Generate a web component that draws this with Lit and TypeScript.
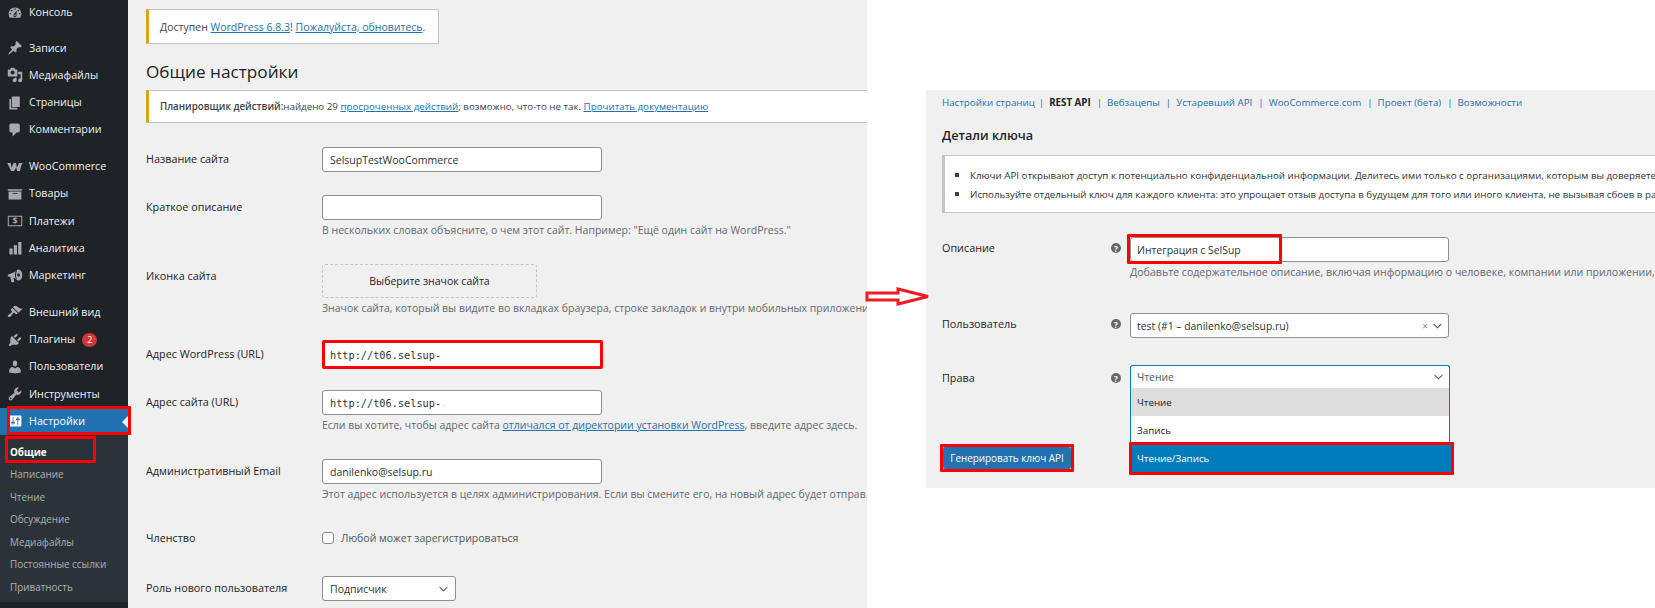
import { LitElement, html, css, svg } from "lit";
import { customElement } from "lit/decorators.js";

const I: Record<string, any> = {
  dash: svg`<path fill-rule="evenodd" d="M3.76 16h12.48c1.1-1.37 1.76-3.11 1.76-5 0-4.42-3.58-8-8-8s-8 3.58-8 8c0 1.89.66 3.63 1.76 5zM10 4c.55 0 1 .45 1 1s-.45 1-1 1-1-.45-1-1 .45-1 1-1zM6 6c.55 0 1 .45 1 1s-.45 1-1 1-1-.45-1-1 .45-1 1-1zm8 0c.55 0 1 .45 1 1s-.45 1-1 1-1-.45-1-1 .45-1 1-1zm-5.37 5.55L12 7v6c0 1.1-.9 2-2 2s-2-.9-2-2c0-.57.24-1.08.63-1.45zM4 10c.55 0 1 .45 1 1s-.45 1-1 1-1-.45-1-1 .45-1 1-1zm12 0c.55 0 1 .45 1 1s-.45 1-1 1-1-.45-1-1 .45-1 1-1zm-5 3c0-.55-.45-1-1-1s-1 .45-1 1 .45 1 1 1 1-.45 1-1z"/>`,
  pin: svg`<path d="M10.44 3.02l1.82-1.82 6.36 6.35-1.83 1.82c-1.05-.68-2.48-.57-3.41.36l-.75.75c-.92.93-1.04 2.35-.35 3.41l-1.83 1.82-2.41-2.41-2.8 2.79c-.42.42-3.38 2.71-3.8 2.29s1.86-3.39 2.28-3.81l2.79-2.79L4.1 9.36l1.83-1.82c1.05.69 2.48.57 3.4-.36l.75-.75c.93-.92 1.05-2.35.36-3.41z"/>`,
  media: svg`<path fill-rule="evenodd" d="M13 11V4c0-.55-.45-1-1-1h-1.67L9 1H5L3.67 3H2c-.55 0-1 .45-1 1v7c0 .55.45 1 1 1h10c.55 0 1-.45 1-1zM7 4.5c1.38 0 2.5 1.12 2.5 2.5S8.38 9.5 7 9.5 4.5 8.38 4.5 7 5.62 4.5 7 4.5zM14 6h5v10.5c0 1.38-1.12 2.5-2.5 2.5S14 17.88 14 16.5s1.12-2.5 2.5-2.5c.17 0 .34.02.5.05V9h-3V6zm-4 8.05V13h2v3.5c0 1.38-1.12 2.5-2.5 2.5S7 17.88 7 16.5 8.12 14 9.5 14c.17 0 .34.02.5.05z"/>`,
  page: svg`<path d="M6 15V2h10v13H6zm-1 1h8v2H3V5h2v11z"/>`,
  comment: svg`<path d="M5 2h9c1.1 0 2 .9 2 2v7c0 1.1-.9 2-2 2h-2l-5 5v-5H5c-1.1 0-2-.9-2-2V4c0-1.1.9-2 2-2z"/>`,
  woo: svg`<path d="M.3 5h4.4l1 6L8.3 5h3l.9 6L15 5h4.7c-1.4 1.7-2.7 5-3.4 10h-3.6l-1.3-4.4L9 15H5.2z"/>`,
  box: svg`<path fill-rule="evenodd" d="M19 4v2H1V4h18zM2 7h16v10H2V7zm11 3V9H7v1h6z"/>`,
  pay: svg`<path fill-rule="evenodd" d="M1 3.5h18v13H1zM2.2 4.7v10.6h15.6V4.7z"/><text x="10" y="14.3" font-size="11" font-weight="700" text-anchor="middle" font-family="Open Sans, sans-serif">$</text>`,
  chart: svg`<path d="M3 10.5h4V18H3zM8.5 6.5h4V18h-4zM14 2.5h4V18h-4z"/>`,
  mega: svg`<path fill-rule="evenodd" d="M1 8.5 12.5 3.6c-.9 1.5-1.3 3.4-1.3 5.2s.4 3.6 1.3 5.1L8 12.1l1 4.5c.1.6-.3 1.2-1 1.2H6.2c-.5 0-.9-.3-1-.8l-1-5.8-3.2-1zM14.5 2a4.6 6.8 0 1 1 0 13.6 4.6 6.8 0 0 1 0-13.6zm0 4.6a1.8 2.2 0 1 0 0 4.4 1.8 2.2 0 0 0 0-4.4z"/>`,
  brush: svg`<path d="M14.48 11.06L7.41 3.99l1.5-1.5c.5-.56 2.3-.47 3.51.32 1.21.8 1.43 1.28 2.91 2.1 1.18.64 2.45 1.26 4.45.85zm-.71.71L6.7 4.7 4.93 6.47c-.39.39-.39 1.02 0 1.41l1.06 1.06c.39.39.39 1.03 0 1.42-.6.6-1.43 1.11-2.21 1.69-.35.26-.7.53-1.01.84C1.43 13.23.4 14.95 1.4 15.95c.98 1 2.7-.03 4.02-1.36.31-.31.58-.66.85-1.02.57-.78 1.08-1.61 1.69-2.21.39-.39 1.02-.39 1.41 0l1.06 1.06c.39.39 1.02.39 1.41 0z"/>`,
  plug: svg`<path d="M13.11 4.36L9.87 7.6 8 5.73l3.24-3.24c.35-.34 1.05-.2 1.56.32.52.51.66 1.21.31 1.55zm-8 1.77l.91-1.12 9.01 9.01-1.19.84c-.71.71-2.63 1.16-3.82 1.16H6.14L4.9 17.26c-.59.59-1.54.59-2.12 0-.59-.58-.59-1.53 0-2.12l1.24-1.24v-3.88c0-1.13.4-3.19 1.09-3.89zm7.26 3.97l3.24-3.24c.34-.35 1.04-.21 1.55.31.52.51.66 1.21.31 1.55l-3.24 3.25z"/>`,
  user: svg`<path d="M10 9.25c-2.27 0-2.73-3.44-2.73-3.44C7 4.02 7.82 2 9.97 2c2.16 0 2.98 2.02 2.71 3.81 0 0-.41 3.44-2.68 3.44zm0 2.57L12.72 10c2.39 0 4.52 2.33 4.52 4.53v2.49s-3.65 1.13-7.24 1.13c-3.65 0-7.24-1.13-7.24-1.13v-2.49c0-2.25 1.94-4.48 4.47-4.48z"/>`,
  tool: svg`<path fill-rule="evenodd" d="M16.68 9.77c-1.34 1.34-3.3 1.67-4.95.99l-5.41 6.52c-.99.99-2.59.99-3.58 0s-.99-2.59 0-3.57l6.52-5.42c-.68-1.65-.35-3.61.99-4.95 1.28-1.28 3.12-1.62 4.72-1.06l-2.89 2.89 2.82 2.82 2.86-2.87c.53 1.58.18 3.39-1.08 4.65zM3.81 16.21c.4.39 1.04.39 1.43 0 .4-.4.4-1.04 0-1.43-.39-.4-1.03-.4-1.43 0-.39.39-.39 1.03 0 1.43z"/>`,
  set: svg`<path fill-rule="evenodd" d="M18 16V4c0-.55-.45-1-1-1H3c-.55 0-1 .45-1 1v12c0 .55.45 1 1 1h14c.55 0 1-.45 1-1zM8 11h1c.55 0 1 .45 1 1s-.45 1-1 1H8v1.5c0 .28-.22.5-.5.5s-.5-.22-.5-.5V13H6c-.55 0-1-.45-1-1s.45-1 1-1h1V5.5c0-.28.22-.5.5-.5s.5.22.5.5V11zm5-2h-1c-.55 0-1-.45-1-1s.45-1 1-1h1V5.5c0-.28.22-.5.5-.5s.5.22.5.5V7h1c.55 0 1 .45 1 1s-.45 1-1 1h-1v5.5c0 .28-.22.5-.5.5s-.5-.22-.5-.5V9z"/>`,
};

const groups: { icon: string; label: string; badge?: string }[][] = [
  [{ icon: "dash", label: "Консоль" }],
  [
    { icon: "pin", label: "Записи" },
    { icon: "media", label: "Медиафайлы" },
    { icon: "page", label: "Страницы" },
    { icon: "comment", label: "Комментарии" },
  ],
  [
    { icon: "woo", label: "WooCommerce" },
    { icon: "box", label: "Товары" },
    { icon: "pay", label: "Платежи" },
    { icon: "chart", label: "Аналитика" },
    { icon: "mega", label: "Маркетинг" },
  ],
  [
    { icon: "brush", label: "Внешний вид" },
    { icon: "plug", label: "Плагины", badge: "2" },
    { icon: "user", label: "Пользователи" },
    { icon: "tool", label: "Инструменты" },
  ],
];
const sub = ["Написание", "Чтение", "Обсуждение", "Медиафайлы", "Постоянные ссылки", "Приватность"];
const tabs = ["Вебзацепы", "Устаревший API", "WooCommerce.com", "Проект (бета)", "Возможности"];

const chevron = html`<svg class="chev" viewBox="0 0 10 6"><path d="M.7.8 5 5 9.3.8" fill="none" stroke="#50575e" stroke-width="1.2"/></svg>`;
const help = html`<span class="help">?</span>`;

@customElement("app-root")
export class AppRoot extends LitElement {
  static styles = css`
    :host { display: block; width: 1655px; height: 608px; overflow: hidden; background: #fff; font-family: "Open Sans", "Noto Sans", sans-serif; color: #1d2327; }
    .root { display: flex; height: 608px; }

    .shot { display: flex; width: 867px; height: 608px; flex: none; }
    .side { position: relative; width: 128px; flex: none; background: #1d2327; color: #f0f0f1; font-size: 10.7px; }
    .group { margin-bottom: 9.5px; }
    .group:nth-child(4) { margin-bottom: 0; }
    .group:first-child .item { height: 25px; }
    .item { display: flex; align-items: center; height: 27.25px; padding-left: 7px; gap: 6px; white-space: nowrap; }
    .item span:first-of-type { padding-bottom: 1px; }
    .item svg { width: 16px; height: 16px; fill: #a7aaad; flex: none; }
    .badge { display: inline-flex; justify-content: center; align-items: center; width: 15px; height: 14px; margin-left: 1px; border-radius: 50%; background: #d63638; color: #fff; font-size: 9px; }
    .item.cur { position: relative; background: #2271b1; color: #fff; }
    .item.cur svg { fill: #fff; }
    .item.cur::after { content: ""; position: absolute; right: 0; top: 8px; border: 6px solid transparent; border-right-color: #f0f0f1; border-left-width: 0; }
    .subs { background: #2c3338; padding: 5.5px 0 4px; height: 167px; box-sizing: border-box; font-size: 9.9px; color: #c3c4c7; }
    .sub { display: flex; align-items: center; height: 22.5px; padding-left: 10px; white-space: nowrap; opacity: .85; }
    .sub.on { color: #fff; font-weight: 700; opacity: 1; }
    .mark { position: absolute; border: 3px solid #f00; box-sizing: border-box; border-radius: 1px; }
    .mark-set { left: 7px; top: 406px; width: 124px; height: 29px; }
    .mark-gen { left: 5px; top: 436px; width: 91px; height: 27px; }

    .main { flex: 1; min-width: 0; background: #f0f0f1; padding: 9px 0 0 18px; overflow: hidden; font-size: 10.5px; color: #3c434a; }
    a { color: #2271b1; text-decoration: underline; }
    .notice { background: #fff; border: 1px solid #c3c4c7; border-left: 3px solid #dba617; box-sizing: border-box; display: flex; align-items: center; padding-left: 11px; white-space: nowrap; }
    .n1 { width: 293px; height: 35px; }
    .n2 { height: 33px; font-size: 9.75px; margin-right: -2px; }
    .n2 b { font-weight: 600; }
    h1 { font-weight: 400; font-size: 17.2px; color: #1d2327; margin: 0; height: 46px; line-height: 56px; }
    .form { display: grid; grid-template-columns: 176px 1fr; grid-template-rows: 48px 69px 76px 50px 69px 67px 50px 1fr; margin-top: 24px; }
    .lab { line-height: 24px; font-size: 10.8px; color: #1d2327; font-weight: 500; white-space: nowrap; }
    .lab.sh { padding-top: 2px; }
    .inp { display: flex; align-items: center; box-sizing: border-box; background: #fff; border: 1px solid #8c8f94; border-radius: 3px; padding-left: 7px; height: 25px; width: 280px; color: #2c3338; white-space: nowrap; overflow: hidden; }
    .inp.red { border: 3px solid #f00; height: 29px; width: 281px; padding-left: 5px; border-radius: 2px; }
    .mono { font-family: "DejaVu Sans Mono", monospace; font-size: 10.25px; }
    .faint { color: #f3dcae; }
    .desc { color: #646970; line-height: 15px; margin-top: 3px; white-space: nowrap; overflow: hidden; }
    .pick { display: flex; align-items: center; justify-content: center; box-sizing: border-box; width: 215px; height: 34px; border: 1px dashed #c3c4c7; border-radius: 3px; color: #1d2327; }
    .chk { display: flex; align-items: center; gap: 7px; height: 24px; color: #50575e; }
    .box { width: 12px; height: 12px; box-sizing: border-box; background: #fff; border: 1px solid #8c8f94; border-radius: 3px; }
    .sel { justify-content: space-between; width: 134px; padding-right: 7px; }
    .chev { width: 9px; height: 6px; flex: none; }

    .arrow { width: 59px; flex: none; padding-top: 285.5px; }
    .arrow svg { display: block; overflow: visible; width: 64px; height: 20px; margin-left: -2px; position: relative; }

    .panel { flex: 1; min-width: 0; height: 398px; margin-top: 90px; background: #f0f0f1; overflow: hidden; padding: 5px 0 0 16px; box-sizing: border-box; font-size: 9.75px; color: #3c434a; }
    .tabs { display: flex; height: 14px; align-items: center; white-space: nowrap; color: #2271b1; }
    .tabs span.t { margin-right: 6px; }
    .tabs span.t:first-child { margin-right: 4px; }
    .tabs span.t b { color: #1d2327; font-weight: 700; }
    .tabs i { font-style: normal; color: #2271b1; margin-right: 5px; }
    h2 { font-size: 12.7px; font-weight: 600; color: #1d2327; margin: 0; height: 46px; line-height: 52px; white-space: nowrap; }
    .info { background: #fff; border: 1px solid #c3c4c7; border-left: 3px solid #c3c4c7; border-right: 0; height: 58px; box-sizing: border-box; padding: 9.5px 0 0 10px; white-space: nowrap; overflow: hidden; color: #2c3338; font-size: 9.75px; }
    .li { display: flex; align-items: center; gap: 11px; height: 19px; }
    .li::before { content: ""; width: 4px; height: 4px; background: #3c434a; flex: none; }
    .kform { display: grid; grid-template-columns: 169px 19px 1fr; grid-template-rows: 76px 53px auto; margin-top: 24px; }
    .klab { font-size: 10.8px; font-weight: 500; color: #1d2327; line-height: 22px; }
    .hc { padding-top: 4px; }
    .help { display: flex; align-items: center; justify-content: center; width: 10px; height: 10px; border-radius: 50%; background: #646970; color: #fff; font-size: 8px; font-weight: 700; margin-top: 2px; }
    .kinp { position: relative; display: flex; align-items: center; box-sizing: border-box; width: 319px; height: 25px; background: #fff; border: 1px solid #8c8f94; border-radius: 3px; padding: 0 6px; font-size: 10.4px; color: #2c3338; white-space: nowrap; }
    .mark-desc { left: -4px; top: -4px; width: 155px; height: 30px; }
    .kdesc { color: #646970; font-size: 10.6px; margin-top: 3px; line-height: 15px; white-space: nowrap; }
    .x { margin-left: auto; margin-right: 5px; color: #888; font-size: 10px; }
    .kleft { grid-column: 1 / span 2; padding-top: 1px; }
    .khead { display: grid; grid-template-columns: 169px 19px; }
    .drop { position: relative; align-self: start; width: 320px; box-sizing: border-box; border: 1.5px solid #007cba; border-bottom: 0; border-radius: 3px 3px 0 0; background: #fff; margin-top: -1px; font-size: 9.8px; color: #1d2327; }
    .dh { display: flex; align-items: center; justify-content: space-between; height: 22px; padding: 0 6px; font-size: 10.4px; color: #50575e; }
    .op { display: flex; align-items: center; height: 28px; padding-left: 6px; }
    .op.g { background: #ddd; }
    .op.w { height: 26px; padding-top: 2px; box-sizing: border-box; }
    .op.s { position: relative; height: 33px; background: #007cba; color: #fff; margin: 0 -1.5px; padding-left: 7.5px; }
    .mark-rw { left: -1px; top: 0; right: -3px; bottom: 0; }
    .gen { position: relative; display: flex; align-items: center; justify-content: center; margin: 58px 0 0 1px; width: 128px; height: 22px; background: #2271b1; color: #fff; font-size: 9.9px; border-radius: 2px; white-space: nowrap; }
    .mark-b { inset: -3px; }
  `;

  render() {
    return html`<div class="root">
      <div class="shot">
        <nav class="side">
          ${groups.map((g) => html`<div class="group">${g.map((m) => html`<div class="item"><svg viewBox="0 0 20 20">${I[m.icon]}</svg><span>${m.label}</span>${m.badge ? html`<span class="badge">${m.badge}</span>` : ""}</div>`)}</div>`)}
          <div class="item cur"><svg viewBox="0 0 20 20">${I.set}</svg><span>Настройки</span></div>
          <div class="subs">
            <div class="sub on">Общие</div>
            ${sub.map((s) => html`<div class="sub">${s}</div>`)}
          </div>
          <div class="mark mark-set"></div>
          <div class="mark mark-gen"></div>
        </nav>
        <main class="main">
          <div class="notice n1"><span>Доступен <a>WordPress 6.8.3</a>! <a>Пожалуйста, обновитесь</a>.</span></div>
          <h1>Общие настройки</h1>
          <div class="notice n2"><span><b>Планировщик действий:</b>найдено 29 <a>просроченных действий</a>; возможно, что-то не так. <a>Прочитать документацию</a></span></div>
          <div class="form">
            <div class="lab">Название сайта</div><div><div class="inp">SelsupTestWooCommerce</div></div>
            <div class="lab">Краткое описание</div><div><div class="inp"></div><div class="desc">В нескольких словах объясните, о чем этот сайт. Например: "Ещё один сайт на WordPress."</div></div>
            <div class="lab">Иконка сайта</div><div><div class="pick">Выберите значок сайта</div><div class="desc">Значок сайта, который вы видите во вкладках браузера, строке закладок и внутри мобильных приложений.</div></div>
            <div class="lab sh">Адрес WordPress (URL)</div><div><div class="inp red mono">http://t06.selsup-</div></div>
            <div class="lab">Адрес сайта (URL)</div><div><div class="inp mono">http://t06.selsup-<span class="faint"> .</span></div><div class="desc">Если вы хотите, чтобы адрес сайта <a>отличался от директории установки WordPress</a>, введите адрес здесь.</div></div>
            <div class="lab">Административный Email</div><div><div class="inp">danilenko@selsup.ru</div><div class="desc">Этот адрес используется в целях администрирования. Если вы смените его, на новый адрес будет отправ.</div></div>
            <div class="lab">Членство</div><div class="chk"><span class="box"></span><span>Любой может зарегистрироваться</span></div>
            <div class="lab">Роль нового пользователя</div><div><div class="inp sel">Подписчик ${chevron}</div></div>
          </div>
        </main>
      </div>
      <div class="arrow"><svg viewBox="0 0 64 20"><path d="M2 7h31V3l30 7.5L33 18v-4H2z" fill="#fff" stroke="#ed1c24" stroke-width="3"/></svg></div>
      <section class="panel">
        <div class="tabs">
          <span class="t">Настройки страниц</span><i>|</i><span class="t"><b>REST API</b></span><i>|</i>
          ${tabs.map((t, n) => html`<span class="t">${t}</span>${n < tabs.length - 1 ? html`<i>|</i>` : ""}`)}
        </div>
        <h2>Детали ключа</h2>
        <div class="info">
          <div class="li">Ключи API открывают доступ к потенциально конфиденциальной информации. Делитесь ими только с организациями, которым вы доверяете.</div>
          <div class="li">Используйте отдельный ключ для каждого клиента: это упрощает отзыв доступа в будущем для того или иного клиента, не вызывая сбоев в работе других.</div>
        </div>
        <div class="kform">
          <div class="klab">Описание</div><div class="hc">${help}</div>
          <div><div class="kinp">Интеграция с SelSup<div class="mark mark-desc"></div></div><div class="kdesc">Добавьте содержательное описание, включая информацию о человеке, компании или приложении, которым будет пользоваться этот ключ.</div></div>
          <div class="klab">Пользователь</div><div class="hc">${help}</div>
          <div><div class="kinp">test (#1 – danilenko@selsup.ru)<span class="x">×</span>${chevron}</div></div>
          <div class="kleft">
            <div class="khead"><div class="klab">Права</div><div class="hc">${help}</div></div>
            <div class="gen">Генерировать ключ API<div class="mark mark-b"></div></div>
          </div>
          <div class="drop">
            <div class="dh">Чтение ${chevron}</div>
            <div class="op g">Чтение</div>
            <div class="op w">Запись</div>
            <div class="op s">Чтение/Запись<div class="mark mark-rw"></div></div>
          </div>
        </div>
      </section>
    </div>`;
  }
}
